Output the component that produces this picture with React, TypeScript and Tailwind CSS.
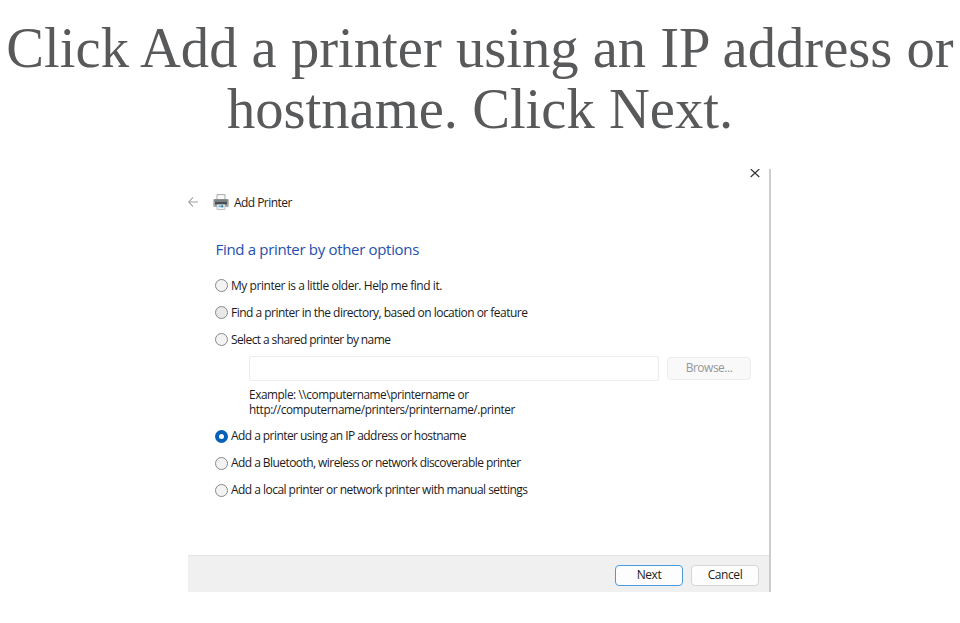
function Option({ label, tracking, checked = false, fill = 'bg-[#f3f3f3]' }: { label: string; tracking: string; checked?: boolean; fill?: string }) {
  return (
    <label className="flex h-[27px] items-center whitespace-nowrap">
      <span
        className={
          checked
            ? 'flex size-[13px] shrink-0 items-center justify-center rounded-full bg-[#0560b8]'
            : `size-[13px] shrink-0 rounded-full border border-[#888888] ${fill}`
        }
      >
        {checked && <span className="size-[5px] rounded-full bg-white" />}
      </span>
      <span className={`ml-[3px] pt-px ${tracking}`}>{label}</span>
    </label>
  );
}

function PrinterIcon() {
  return (
    <svg width="16" height="16" viewBox="0 0 16 16" className="shrink-0">
      <path d="M4 6V.6h8V6" fill="#fafafa" stroke="#a8abad" />
      <rect x=".3" y="5" width="15.4" height="8" rx="1" fill="#a4a8ab" />
      <rect x="1.5" y="5.3" width="13" height="2.7" fill="#7a7f83" />
      <rect x="2" y="8" width="12" height="2.6" fill="#474d51" />
      <path d="M4 10.5h8v5H4z" fill="#eef6fa" stroke="#b0b4b6" strokeWidth=".8" />
      <path d="M5.5 11.3h3v2h-3z" fill="#6cc0dc" />
      <path d="M8.3 11.3h2v2h-2z" fill="#286e9d" />
    </svg>
  );
}

export default function App() {
  return (
    <main className="flex h-[623px] w-[960px] flex-col overflow-hidden bg-white font-['Open_Sans','Noto_Sans',sans-serif] text-[12px] leading-[14.5px] text-[#1c1c1c]">
      <h1 className="mt-[18px] h-[151px] text-center font-['Liberation_Serif','Times_New_Roman',serif] text-[56.6px] leading-[61px] whitespace-nowrap text-[#58595b]">
        Click Add a printer using an IP address or
        <br />
        hostname. Click Next.
      </h1>
      <section className="ml-[188px] flex h-[423px] w-[583px] flex-col border-r-2 border-[#cdcdcd]">
        <div className="flex h-[9px] justify-end pr-[9px]">
          <svg width="10" height="9" viewBox="0 0 10 9" fill="none" stroke="#333" strokeWidth="1.2">
            <path d="M.7 0 9.3 8M9.3 0 .7 8" />
          </svg>
        </div>
        <header className="mt-[15px] flex h-[18px] items-center">
          <svg width="10" height="10" viewBox="0 0 10 10" fill="none" stroke="#a0a0a0" strokeWidth="1.1">
            <path d="M10 5H.8M5 .4.8 5 5 9.6" />
          </svg>
          <span className="ml-[15px]">
            <PrinterIcon />
          </span>
          <span className="ml-[5px] pt-[2px] tracking-[-0.55px]">Add Printer</span>
        </header>
        <h2 className="mt-[28px] ml-[27.5px] h-[21px] text-[15px] leading-[21px] tracking-[-0.32px] whitespace-nowrap text-[#2450ae]">
          Find a printer by other options
        </h2>
        <div className="mt-[12px] ml-[27px]">
          <Option label="My printer is a little older. Help me find it." tracking="tracking-[-0.45px]" />
          <Option label="Find a printer in the directory, based on location or feature" tracking="tracking-[-0.52px]" fill="bg-[#e8e8e8]" />
          <Option label="Select a shared printer by name" tracking="tracking-[-0.6px]" />
        </div>
        <div className="mt-[3px] ml-[61px] flex items-center">
          <div className="h-[25px] w-[410px] rounded-[2px] border border-[#ececec] bg-white" />
          <button className="ml-[8px] h-[23px] w-[84px] rounded-[4px] border border-[#ececec] bg-[#f9f9f9] tracking-[-0.5px] text-[#979797]">
            Browse...
          </button>
        </div>
        <p className="mt-[6px] ml-[61px] h-[29px] text-[11.8px] tracking-[-0.42px] whitespace-nowrap">
          Example: \\computername\printername or
          <br />
          http://computername/printers/printername/.printer
        </p>
        <div className="mt-[6.5px] ml-[27px]">
          <Option label="Add a printer using an IP address or hostname" tracking="tracking-[-0.56px]" checked />
          <Option label="Add a Bluetooth, wireless or network discoverable printer" tracking="tracking-[-0.56px]" />
          <Option label="Add a local printer or network printer with manual settings" tracking="tracking-[-0.53px]" />
        </div>
        <footer className="mt-auto flex h-[37px] items-center justify-end gap-[8px] border-t border-[#e3e3e3] bg-[#f0f0f0] pt-[2px] pr-[10px]">
          <button className="h-[21px] w-[68px] rounded-[4px] border border-[#4a9ade] bg-[#fdfdfd] pt-px tracking-[-0.4px]">Next</button>
          <button className="h-[21px] w-[68px] rounded-[4px] border border-[#d5d5d5] bg-[#fdfdfd] pt-px tracking-[-0.4px]">Cancel</button>
        </footer>
      </section>
    </main>
  );
}
